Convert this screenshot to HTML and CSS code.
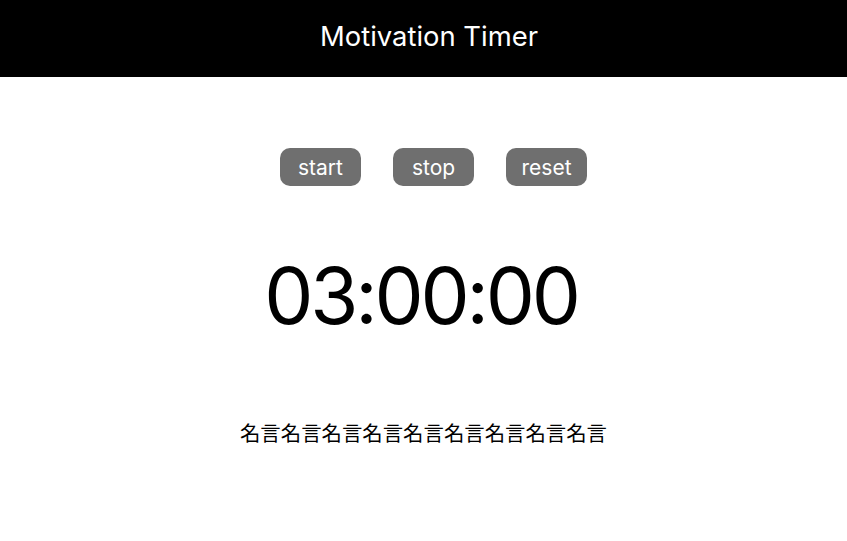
FILE: index.html
```html
<!DOCTYPE html>
<html lang="ja">
<head>
<meta charset="utf-8">
<title>Motivation Timer</title>
<link rel="stylesheet" href="styles.css">
</head>
<body>
<header class="header">
  <h1 class="title">Motivation Timer</h1>
</header>
<main class="main">
  <div class="controls">
    <button class="btn">start</button>
    <button class="btn">stop</button>
    <button class="btn">reset</button>
  </div>
  <div class="timer">03:00:00</div>
  <p class="quote">名言名言名言名言名言名言名言名言名言</p>
</main>
</body>
</html>
```
FILE: styles.css
```css
html, body {
  margin: 0;
  padding: 0;
  background: #fff;
  font-family: Inter, "Noto Sans CJK JP", sans-serif;
}
.header {
  background: #000;
  height: 77px;
  display: flex;
  align-items: center;
  justify-content: center;
}
.title {
  margin: 0;
  color: #fff;
  font-size: 27.4px;
  font-weight: 400;
  line-height: 1;
  padding: 0 0 4px 11px;
}
.main {
  display: flex;
  flex-direction: column;
  align-items: center;
}
.controls {
  margin-top: 71px;
  padding-left: 20px;
  display: flex;
  gap: 32px;
}
.btn {
  width: 81px;
  height: 38px;
  border: none;
  border-radius: 10px;
  background: #6f6f6f;
  color: #fff;
  font-family: Inter, sans-serif;
  font-size: 21px;
  padding: 2px 0 0 0;
  line-height: 36px;
}
.timer {
  margin-top: 60px;
  padding-right: 5px;
  font-size: 78px;
  letter-spacing: -3.2px;
  line-height: 100px;
  color: #000;
}
.quote {
  margin: 71px 0 0;
  font-size: 20.4px;
  line-height: 30px;
  font-family: "Noto Sans CJK JP", sans-serif;
}
```
